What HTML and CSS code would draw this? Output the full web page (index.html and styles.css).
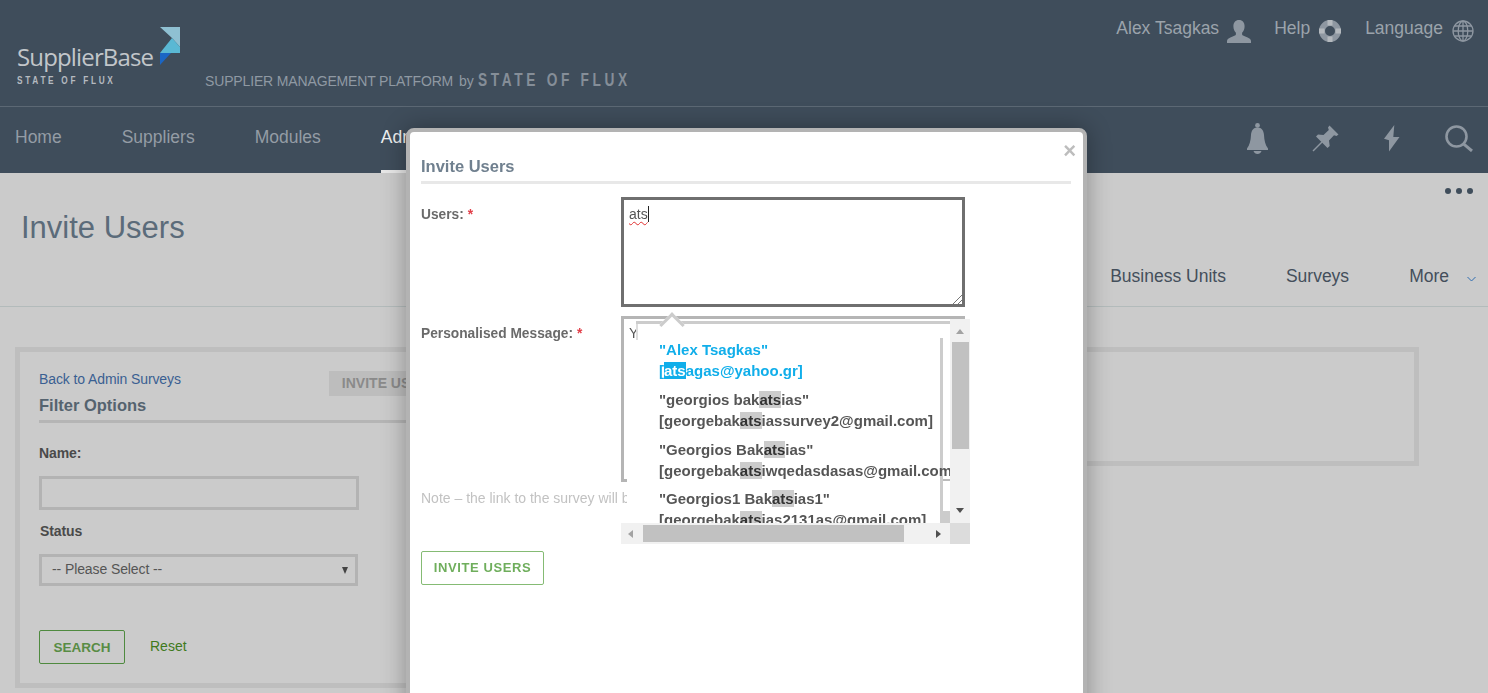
FILE: index.html
```html
<!DOCTYPE html>
<html lang="en">
<head>
<meta charset="utf-8">
<title>Invite Users</title>
<link rel="stylesheet" href="styles.css">
</head>
<body>
<header class="site-header">
  <div class="topbar">
    <a class="logo">
      <span class="logo-text">
        <span class="logo-name">SupplierBase</span>
        <span class="logo-sub">STATE OF FLUX</span>
      </span>
      <svg class="logo-mark" width="20" height="38" viewBox="0 0 20 38">
        <polygon points="0,0 20,0 20,20 12,11" fill="#8fc0d2"/>
        <polygon points="12,11 20,20 20,26 0,26" fill="#5ab8d4"/>
        <polygon points="0,26 11,26 0,38" fill="#1b66c4"/>
      </svg>
    </a>
    <div class="tagline">
      <span>SUPPLIER MANAGEMENT PLATFORM</span>
      <span class="tag-by">by</span>
      <span class="tag-brand">STATE OF FLUX</span>
    </div>
    <div class="account">
      <a class="account-item">Alex Tsagkas
        <svg width="24" height="23" viewBox="0 0 24 23"><path fill="#8e97a1" d="M12 0c3.600 0 5.600 2.700 5.600 6.200 0 2.700-1 5-2.500 6.500v1.800c0 1 2.500 1.700 5 2.800 2 .9 3.900 1.800 3.900 3.700v2H0v-2c0-1.900 1.900-2.800 3.900-3.700 2.500-1.100 5-1.800 5-2.800v-1.800C7.400 11.200 6.400 8.900 6.400 6.200 6.400 2.700 8.400 0 12 0z"/></svg>
      </a>
      <a class="account-item">Help
        <svg width="22" height="22" viewBox="0 0 22 22"><circle cx="11" cy="11" r="8" fill="none" stroke="#8e97a1" stroke-width="6"/><path stroke="#b4b9be" stroke-width="5" d="M11 0v5.500M11 16.500V22M0 11h5.500M16.500 11H22"/></svg>
      </a>
      <a class="account-item">Language
        <svg width="22" height="22" viewBox="0 0 22 22" fill="none" stroke="#8e97a1" stroke-width="1.300"><circle cx="11" cy="11" r="10"/><ellipse cx="11" cy="11" rx="4.800" ry="10"/><path d="M11 1v20M1 11h20M2.500 6h17M2.500 16h17"/></svg>
      </a>
    </div>
  </div>
  <nav class="mainnav">
    <a class="nav-item">Home</a>
    <a class="nav-item">Suppliers</a>
    <a class="nav-item">Modules</a>
    <a class="nav-item is-active">Admin</a>
    <div class="nav-tools">
      <svg width="21" height="31" viewBox="0 0 21 31" fill="#8e97a1"><circle cx="10.500" cy="2.400" r="2.400"/><path d="M10.500 4.500c4.300 0 6.300 3.500 6.500 7.500.3 5.500 1.300 10 4 13.500V27H0v-1.500C2.700 22 3.700 17.500 4 12c.2-4 2.200-7.500 6.500-7.500z"/><path d="M6.500 28h8c-.6 1.800-2.200 3-4 3s-3.400-1.200-4-3z"/></svg>
      <svg width="27" height="27" viewBox="0 0 27 27"><polygon fill="#8e97a1" points="17.500,0.500 26.500,9.500 24.500,11 22,10.200 17,15.500 17.700,21 15.500,23 4,11.500 6,9.500 11.500,10 16.800,5 16,2.500"/><path d="M10 17L1 26" stroke="#8e97a1" stroke-width="1.500"/></svg>
      <svg width="18" height="28" viewBox="0 0 18 28"><polygon fill="#8e97a1" points="11.300,1 1,14.700 6,16.300 6,27.500 16.500,13 10.300,13"/></svg>
      <svg width="28" height="27" viewBox="0 0 28 27" fill="none" stroke="#8e97a1" stroke-width="2.600"><circle cx="11.500" cy="11.500" r="10"/><path d="M18.500 18.800L27 26" stroke-width="3"/></svg>
    </div>
  </nav>
</header>

<main class="page">
  <section class="page-head">
    <div class="dots"><i></i><i></i><i></i></div>
    <h1 class="page-title">Invite Users</h1>
    <div class="tabs">
      <a class="tab">Business Units</a>
      <a class="tab">Surveys</a>
      <a class="tab">More</a>
      <svg class="tab-chev" width="9" height="6" viewBox="0 0 9 6" fill="none" stroke="#2f6cb0"><path d="M.5 1l4 4 4-4"/></svg>
    </div>
  </section>
  <section class="panels">
    <div class="panel panel-filter">
      <div class="filter-top">
        <a class="back-link">Back to Admin Surveys</a>
        <span class="btn-invite-bg">INVITE USERS</span>
      </div>
      <h2 class="filter-title">Filter Options</h2>
      <label class="f-label f-name">Name:</label>
      <div class="f-input"></div>
      <label class="f-label f-status">Status</label>
      <div class="f-select">-- Please Select --<span class="f-caret"></span></div>
      <div class="f-actions">
        <a class="btn-search">SEARCH</a>
        <a class="reset">Reset</a>
      </div>
    </div>
    <div class="panel panel-results"></div>
  </section>
</main>

<div class="modal">
  <span class="modal-close">×</span>
  <h2 class="modal-title">Invite Users</h2>
  <div class="m-row">
    <label class="m-label">Users: <b>*</b></label>
    <div class="m-area m-focus"><span class="spell">ats</span><span class="caret"></span>
      <svg class="grip" width="10" height="10" viewBox="0 0 10 10" stroke="#777" fill="none"><path d="M1 10L10 1M6 10l4-4"/></svg>
    </div>
  </div>
  <div class="m-row m-row-msg">
    <label class="m-label">Personalised Message: <b>*</b></label>
    <div class="m-area m-msg">Y</div>
  </div>
  <p class="m-note">Note – the link to the survey will be included</p>
  <a class="m-submit">INVITE USERS</a>

  <div class="suggest">
    <span class="suggest-arrow"></span>
    <div class="suggest-view">
      <ul class="suggest-list">
        <li class="is-current">"Alex Tsagkas"<br>[<mark>ats</mark>agas@yahoo.gr]</li>
        <li>"georgios bak<mark>ats</mark>ias"<br>[georgebak<mark>ats</mark>iassurvey2@gmail.com]</li>
        <li>"Georgios Bak<mark>ats</mark>ias"<br>[georgebak<mark>ats</mark>iwqedasdasas@gmail.com]</li>
        <li>"Georgios1 Bak<mark>ats</mark>ias1"<br>[georgebak<mark>ats</mark>ias2131as@gmail.com]</li>
      </ul>
    </div>
    <div class="vbar">
      <span class="arr arr-up"></span>
      <span class="vthumb"></span>
      <span class="arr arr-down"></span>
    </div>
    <div class="hbar">
      <span class="arr arr-left"></span>
      <span class="hthumb"></span>
      <span class="arr arr-right"></span>
    </div>
    <div class="corner"></div>
  </div>
</div>
</body>
</html>
```
FILE: styles.css
```css
* { box-sizing: border-box; }
html, body { margin: 0; height: 693px; overflow: hidden; }
body { background: #cbcbcb; font-family: "Liberation Sans", Arial, sans-serif; color: #444; }
h1, h2, p, ul { margin: 0; padding: 0; }
ul { list-style: none; }

.site-header { background: #3f4d5b; color: #9ba3ab; }
.topbar { height: 107px; display: flex; padding-left: 17px; border-bottom: 1px solid #5c6874; }
.logo { display: flex; align-items: flex-start; width: 188px; padding-top: 27px; }
.logo-text { display: flex; flex-direction: column; padding-top: 16px; width: 143px; }
.logo-name { font-family: "Open Sans", sans-serif; font-size: 24px; line-height: 28px; letter-spacing: -.85px; color: #c2c6ca; }
.logo-sub { font-size: 11px; line-height: 12px; font-weight: 700; letter-spacing: 3.600px; color: #b5bac0; margin-top: 3px; white-space: nowrap; transform: scaleX(.75); transform-origin: left center; }
.logo-mark { flex: none; }
.tagline { display: flex; align-items: baseline; padding-top: 69px; font-size: 14px; letter-spacing: -.15px; color: #8f99a3; white-space: nowrap; }
.tag-by { margin-left: 6px; }
.tag-brand { margin-left: 4px; font-size: 19px; font-weight: 700; letter-spacing: 5.100px; color: #858e98; transform: scaleX(.72); transform-origin: left center; }
.account { margin-left: auto; padding: 18px 14px 0 0; display: flex; align-items: flex-start; gap: 24px; }
.account-item { display: flex; align-items: flex-start; gap: 9px; font-size: 17.500px; line-height: 20px; }
.account-item:first-child { gap: 8px; margin-right: -1px; }
.account-item svg { margin-top: 2px; }

.mainnav { height: 66px; display: flex; align-items: flex-start; gap: 60px; padding: 0 15px; font-size: 17.500px; }
.nav-item { height: 66px; line-height: 60px; color: #949ca5; }
.nav-item.is-active { color: #eceeef; border-bottom: 3px solid #e8e8e8; }
.nav-tools { margin-left: auto; display: flex; align-items: center; gap: 44px; height: 66px; padding-bottom: 4px; }

.page-head { height: 134px; border-bottom: 1px solid #b3bbbb; padding-top: 15px; }
.dots { display: flex; justify-content: flex-end; gap: 5px; padding-right: 15px; height: 6px; }
.dots i { width: 6px; height: 6px; border-radius: 50%; background: #3f4d5b; }
.page-title { font-size: 31px; line-height: 36px; font-weight: 400; color: #5b6b7a; margin: 16px 0 0 21px; }
.tabs { display: flex; justify-content: flex-end; align-items: center; gap: 60px; margin-top: 17px; padding-right: 14px; height: 26px; }
.tab { font-size: 17.500px; line-height: 26px; color: #444f5b; }
.tab-chev { margin: 6px -2px 0 -42px; }

.panels { display: grid; grid-template-columns: 545px 859px; padding: 40px 0 0 15px; align-items: start; }
.panel { border: 5px solid #bebebe; }
.panel-filter { height: 341px; padding: 19px 0 0 19px; border-right: 0; }
.panel-results { height: 119px; border-left: 0; }
.filter-top { display: flex; height: 24px; }
.back-link { font-size: 14px; line-height: 16px; letter-spacing: -.1px; color: #3a5f92; }
.btn-invite-bg { margin-left: 148px; width: 150px; height: 25px; padding-left: 13px; background: #bdbdbd; color: #8a8a8a; font-size: 14px; font-weight: 700; line-height: 25px; white-space: nowrap; }
.filter-title { font-size: 16.500px; line-height: 20px; font-weight: 700; color: #55636f; padding-bottom: 5px; border-bottom: 3px solid #b5b5b5; }
.f-label { display: block; font-size: 14px; line-height: 16px; font-weight: 700; color: #4a4a4a; letter-spacing: -.1px; }
.f-name { margin-top: 22px; }
.f-input { width: 320px; height: 34px; margin-top: 15px; border: 3px solid #b3b3b3; }
.f-status { margin: 13px 0 0 1px; }
.f-select { display: flex; align-items: center; width: 319px; height: 32px; margin-top: 15px; padding: 0 0 2px 10px; border: 3px solid #b3b3b3; font-size: 14px; letter-spacing: -.1px; color: #555; }
.f-caret { margin: 2px 7px 0 auto; border-left: 3.500px solid transparent; border-right: 3.500px solid transparent; border-top: 7px solid #444; }
.f-actions { display: flex; align-items: flex-start; gap: 25px; margin-top: 44px; }
.btn-search { width: 86px; height: 34px; border: 1px solid #4f8a3f; border-radius: 2px; text-align: center; font-size: 13.500px; font-weight: 700; line-height: 33px; color: #588c44; }
.reset { font-size: 14px; line-height: 32px; color: #3f7a1c; }

.modal { position: fixed; left: 406px; top: 128px; width: 681px; height: 640px; padding: 24px 12px 0 11px; background: #fff; border: 4px solid #b3b3b3; border-radius: 8px; box-shadow: 0 0 24px rgba(0,0,0,.32); }
.modal-close { position: absolute; top: 8px; right: 7px; font-size: 22px; line-height: 22px; font-weight: 700; color: #bdbdbd; }
.modal-title { font-size: 16.500px; line-height: 20px; font-weight: 700; color: #70808f; padding-bottom: 5px; border-bottom: 3px solid #e8e8e8; }
.m-row { display: flex; margin-top: 13px; }
.m-row-msg { margin-top: 9px; }
.m-label { width: 200px; padding-top: 10px; font-size: 13.750px; line-height: 16px; font-weight: 700; color: #6a6a6a; }
.m-label b { color: #e2404a; }
.m-area { position: relative; width: 344px; padding: 4px 5px; font-size: 14px; line-height: 20px; color: #555; }
.m-focus { height: 110px; border: 3px solid #6f6f6f; }
.m-msg { height: 166px; border: 3px solid #b5b5b5; }
.spell { text-decoration: underline wavy #e03030 1px; text-underline-offset: 2px; }
.caret { display: inline-block; width: 1px; height: 16px; background: #222; vertical-align: -3px; }
.grip { position: absolute; right: 0; bottom: 0; }
.m-note { margin-top: 8px; font-size: 14px; line-height: 16px; color: #c2c2c2; white-space: nowrap; }
.m-submit { display: block; width: 123px; height: 34px; margin-top: 45px; border: 1px solid #85bb74; border-radius: 2px; text-align: center; font-size: 13px; font-weight: 700; line-height: 31px; letter-spacing: .6px; color: #6fae5c; }

.suggest { position: absolute; left: 211px; top: 187px; width: 349px; height: 225px; display: grid; grid-template: 204px 21px / 329px 20px; }
.suggest-arrow { position: absolute; z-index: 2; left: 42px; top: -3px; width: 18px; height: 18px; transform: rotate(45deg); background: #fff; border-top: 3px solid #ccc; border-left: 3px solid #ccc; }
.suggest-view { position: relative; overflow: hidden; clip-path: polygon(15px 2px, 100% 2px, 100% 100%, 6px 100%, 6px 19px, 15px 19px); }
.suggest-list { position: absolute; left: 6px; right: 0; top: 2px; bottom: 0; padding: 18px 0 0 32px; white-space: nowrap; font-size: 15px; line-height: 21px; font-weight: 700; color: #555;
  background:
    linear-gradient(#ccc, #ccc) no-repeat 0 0 / 100% 3px,
    linear-gradient(#ddd, #ddd) no-repeat 9px 0 / 2px 19px,
    linear-gradient(#ccc, #ccc) no-repeat 313px 17px / 3px 100%,
    linear-gradient(#bbb, #bbb) no-repeat 316px 158px / 7px 2px,
    linear-gradient(#ccc, #ccc) no-repeat 316px 190px / 7px 12px,
    #fff; }
.suggest-list li { margin-bottom: 7.750px; }
.suggest-list mark { background: #ccc; color: #333; }
.suggest-list .is-current { color: #10aeea; }
.suggest-list .is-current mark { background: #10aeea; color: #fff; }
.vbar { position: relative; display: flex; flex-direction: column; align-items: center; background: #f1f1f1; }
.vthumb { width: 17px; height: 107px; margin-top: 8px; background: #c1c1c1; }
.hbar { display: flex; align-items: center; padding-left: 7px; background: #f1f1f1; }
.hthumb { width: 261px; height: 17px; margin-left: 10px; background: #c1c1c1; }
.corner { background: #dcdcdc; }
.arr { width: 0; height: 0; border: 4.500px solid transparent; flex: none; }
.arr-up { border-top: 0; border-bottom: 5px solid #a3a3a3; margin-top: 10px; }
.arr-down { border-bottom: 0; border-top: 5px solid #505050; margin-top: 59px; }
.arr-left { border-left: 0; border-right: 5px solid #a3a3a3; }
.arr-right { border-right: 0; border-left: 5px solid #505050; margin-left: 32px; }
```
